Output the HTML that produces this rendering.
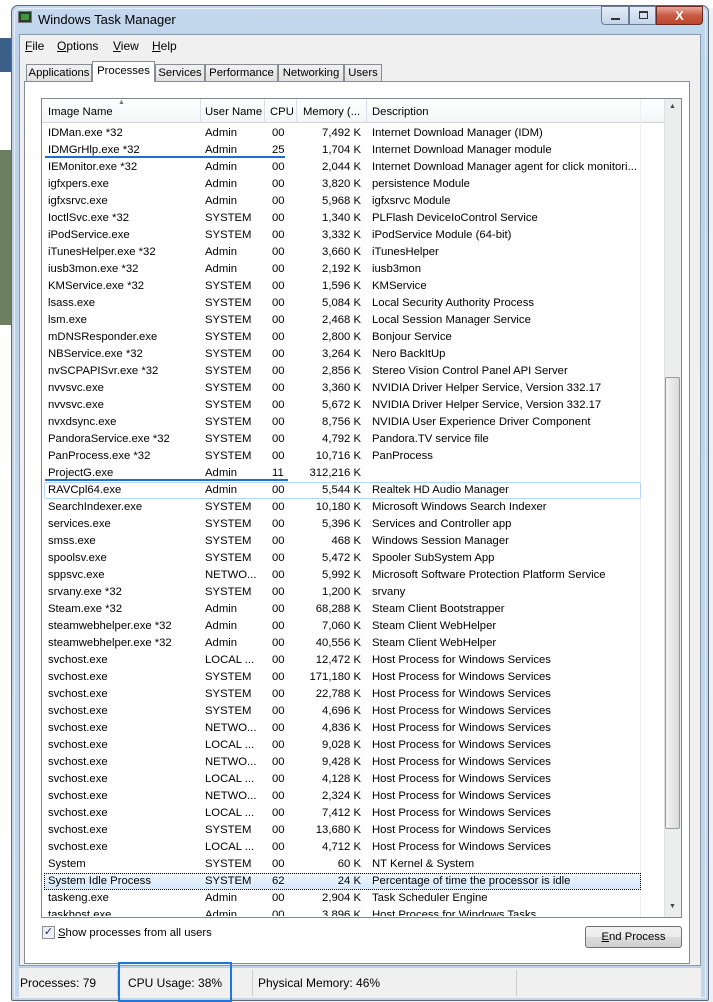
<!DOCTYPE html><html><head><meta charset="utf-8"><style>
*{margin:0;padding:0;box-sizing:border-box}
body{width:713px;height:1002px;overflow:hidden;background:#f0f0f0;font-family:"Liberation Sans",sans-serif;font-size:11.3px;color:#000;position:relative}
.a{position:absolute}
.row{position:absolute;left:42px;width:598px;height:17px;line-height:17px;white-space:nowrap}
.row span{position:absolute;top:0}
.c1{left:6px}.c2{left:163px}.c3{left:230px}.c4{right:279px;text-align:right}.c5{left:330px}
</style></head><body>
<div class="a" style="left:0;top:0;width:14px;height:1002px;background:#fff"></div>
<div class="a" style="left:0;top:38px;width:14px;height:34px;background:#3c5f8a"></div>
<div class="a" style="left:0;top:150px;width:14px;height:175px;background:#6e7e60"></div>
<div class="a" style="left:0;top:0;width:713px;height:8px;background:#fff"></div>
<div class="a" style="left:11px;top:5px;width:698px;height:996px;border:1px solid #5a6a80;border-radius:7px 7px 2px 2px;background:linear-gradient(#c5d8ee,#bcd2ea 60px,#c4d6ea);"></div>
<div class="a" style="left:14px;top:8px;width:692px;height:990px;border:1px solid #e6eef8;border-radius:6px 6px 0 0"></div>
<div class="a" style="left:18px;top:11px;width:14px;height:12px;background:#2a3a2a;border:1px solid #777"><div style="margin:2px;height:6px;background:#3c9a3c"></div></div>
<div class="a" style="left:38px;top:12px;font-size:13px;color:#000">Windows Task Manager</div>
<div class="a" style="left:601px;top:6px;width:28px;height:19px;border:1px solid #6b7c95;border-radius:0 0 0 4px;background:linear-gradient(#e4ecf6,#c4d4e8)"><div style="position:absolute;left:9px;top:11px;width:9px;height:2px;background:#333"></div></div>
<div class="a" style="left:629px;top:6px;width:27px;height:19px;border:1px solid #6b7c95;background:linear-gradient(#e4ecf6,#c4d4e8)"><div style="position:absolute;left:9px;top:4px;width:9px;height:8px;border:1px solid #333;border-top-width:2px"></div></div>
<div class="a" style="left:656px;top:6px;width:47px;height:19px;border:1px solid #6a2a20;border-radius:0 0 4px 0;background:linear-gradient(#e9a99a,#c75a44 50%,#c0452e);color:#fff;font-weight:bold;font-size:13px;text-align:center;line-height:17px">X</div>
<div class="a" style="left:19px;top:34px;width:682px;height:932px;background:#f0f0f0;border:1px solid #8899aa"></div>
<div class="a" style="left:25px;top:39px;font-size:12px"><u>F</u>ile</div>
<div class="a" style="left:57px;top:39px;font-size:12px"><u>O</u>ptions</div>
<div class="a" style="left:113px;top:39px;font-size:12px"><u>V</u>iew</div>
<div class="a" style="left:152px;top:39px;font-size:12px"><u>H</u>elp</div>
<div class="a" style="left:24px;top:81px;width:666px;height:883px;background:#fff;border:1px solid #898c95"></div>
<div class="a" style="left:26px;top:64px;width:66px;height:18px;border:1px solid #898c95;background:linear-gradient(#f2f2f2,#e0e0e0);text-align:center;line-height:16px">Applications</div>
<div class="a" style="left:92px;top:61px;width:63px;height:21px;border:1px solid #898c95;border-bottom:none;background:#fff;text-align:center;line-height:18px">Processes</div>
<div class="a" style="left:155px;top:64px;width:50px;height:18px;border:1px solid #898c95;background:linear-gradient(#f2f2f2,#e0e0e0);text-align:center;line-height:16px">Services</div>
<div class="a" style="left:205px;top:64px;width:73px;height:18px;border:1px solid #898c95;background:linear-gradient(#f2f2f2,#e0e0e0);text-align:center;line-height:16px">Performance</div>
<div class="a" style="left:278px;top:64px;width:66px;height:18px;border:1px solid #898c95;background:linear-gradient(#f2f2f2,#e0e0e0);text-align:center;line-height:16px">Networking</div>
<div class="a" style="left:344px;top:64px;width:38px;height:18px;border:1px solid #898c95;background:linear-gradient(#f2f2f2,#e0e0e0);text-align:center;line-height:16px">Users</div>
<div class="a" style="left:41px;top:98px;width:641px;height:820px;border:1px solid #828790;background:#fff;overflow:hidden">
 <div class="a" style="left:0;top:0;width:623px;height:24px;background:linear-gradient(#fff,#f3f5f8);border-bottom:1px solid #d5d5d5"></div>
 <div class="a" style="left:158px;top:0;width:1px;height:24px;background:#dde"></div>
 <div class="a" style="left:222px;top:0;width:1px;height:24px;background:#dde"></div>
 <div class="a" style="left:254px;top:0;width:1px;height:24px;background:#dde"></div>
 <div class="a" style="left:324px;top:0;width:1px;height:24px;background:#dde"></div>
 <div class="a" style="left:598px;top:0;width:1px;height:818px;background:#eee"></div>
 <div class="a" style="left:6px;top:7px">Image Name</div>
 <div class="a" style="left:76px;top:0;font-size:7px;color:#778">▲</div>
 <div class="a" style="left:163px;top:7px">User Name</div>
 <div class="a" style="left:228px;top:7px">CPU</div>
 <div class="a" style="left:261px;top:7px">Memory (...</div>
 <div class="a" style="left:330px;top:7px">Description</div>
 <div class="a" style="left:622px;top:0;width:17px;height:818px;background:#eceded;border-left:1px solid #e0e0e0"></div>
 <div class="a" style="left:627px;top:4px;font-size:7px;color:#444">▲</div>
 <div class="a" style="left:627px;top:804px;font-size:7px;color:#444">▼</div>
 <div class="a" style="left:623px;top:278px;width:15px;height:452px;border:1px solid #999;border-radius:2px;background:linear-gradient(90deg,#f4f4f4,#dadada)"></div>
</div>
<div id="rows"></div>
<div class="a" style="left:45px;top:156px;width:240px;height:2px;background:#1a6fd0"></div>
<div class="a" style="left:45px;top:479px;width:243px;height:2px;background:#1a6fd0"></div>
<div class="a" style="left:44px;top:482px;width:597px;height:17px;border:1px solid #b8d6fb;border-radius:2px"></div>
<div class="a" style="left:44px;top:873px;width:597px;height:17px;border:1px dotted #000;background:linear-gradient(#f1f7fe,#d5e6fb)"></div>
<div class="a" style="left:42px;top:926px;width:13px;height:13px;border:1px solid #8f8f8f;background:#eef;font-size:11px;line-height:11px;text-align:center;color:#234">✓</div>
<div class="a" style="left:58px;top:927px"><u>S</u>how processes from all users</div>
<div class="a" style="left:585px;top:926px;width:97px;height:22px;border:1px solid #707070;border-radius:3px;background:linear-gradient(#f2f2f2,#ebebeb 50%,#dddddd 51%,#cfcfcf);text-align:center;line-height:20px"><u>E</u>nd Process</div>
<div class="a" style="left:19px;top:967px;width:682px;height:31px;background:#f0f0f0;border-top:1px solid #ccc"></div>
<div class="a" style="left:117px;top:970px;width:1px;height:26px;background:#ccc"></div>
<div class="a" style="left:252px;top:970px;width:1px;height:26px;background:#ccc"></div>
<div class="a" style="left:516px;top:970px;width:1px;height:26px;background:#ccc"></div>
<div class="a" style="left:20px;top:976px;font-size:12px">Processes: 79</div>
<div class="a" style="left:128px;top:976px;font-size:12px">CPU Usage: 38%</div>
<div class="a" style="left:258px;top:976px;font-size:12px">Physical Memory: 46%</div>
<div class="a" style="left:118px;top:962px;width:114px;height:40px;border:2px solid #1e78d8"></div>
<script>
var d=`IDMan.exe *32|Admin|00|7,492 K|Internet Download Manager (IDM)
IDMGrHlp.exe *32|Admin|25|1,704 K|Internet Download Manager module
IEMonitor.exe *32|Admin|00|2,044 K|Internet Download Manager agent for click monitori...
igfxpers.exe|Admin|00|3,820 K|persistence Module
igfxsrvc.exe|Admin|00|5,968 K|igfxsrvc Module
IoctlSvc.exe *32|SYSTEM|00|1,340 K|PLFlash DeviceIoControl Service
iPodService.exe|SYSTEM|00|3,332 K|iPodService Module (64-bit)
iTunesHelper.exe *32|Admin|00|3,660 K|iTunesHelper
iusb3mon.exe *32|Admin|00|2,192 K|iusb3mon
KMService.exe *32|SYSTEM|00|1,596 K|KMService
lsass.exe|SYSTEM|00|5,084 K|Local Security Authority Process
lsm.exe|SYSTEM|00|2,468 K|Local Session Manager Service
mDNSResponder.exe|SYSTEM|00|2,800 K|Bonjour Service
NBService.exe *32|SYSTEM|00|3,264 K|Nero BackItUp
nvSCPAPISvr.exe *32|SYSTEM|00|2,856 K|Stereo Vision Control Panel API Server
nvvsvc.exe|SYSTEM|00|3,360 K|NVIDIA Driver Helper Service, Version 332.17
nvvsvc.exe|SYSTEM|00|5,672 K|NVIDIA Driver Helper Service, Version 332.17
nvxdsync.exe|SYSTEM|00|8,756 K|NVIDIA User Experience Driver Component
PandoraService.exe *32|SYSTEM|00|4,792 K|Pandora.TV service file
PanProcess.exe *32|SYSTEM|00|10,716 K|PanProcess
ProjectG.exe|Admin|11|312,216 K|
RAVCpl64.exe|Admin|00|5,544 K|Realtek HD Audio Manager
SearchIndexer.exe|SYSTEM|00|10,180 K|Microsoft Windows Search Indexer
services.exe|SYSTEM|00|5,396 K|Services and Controller app
smss.exe|SYSTEM|00|468 K|Windows Session Manager
spoolsv.exe|SYSTEM|00|5,472 K|Spooler SubSystem App
sppsvc.exe|NETWO...|00|5,992 K|Microsoft Software Protection Platform Service
srvany.exe *32|SYSTEM|00|1,200 K|srvany
Steam.exe *32|Admin|00|68,288 K|Steam Client Bootstrapper
steamwebhelper.exe *32|Admin|00|7,060 K|Steam Client WebHelper
steamwebhelper.exe *32|Admin|00|40,556 K|Steam Client WebHelper
svchost.exe|LOCAL ...|00|12,472 K|Host Process for Windows Services
svchost.exe|SYSTEM|00|171,180 K|Host Process for Windows Services
svchost.exe|SYSTEM|00|22,788 K|Host Process for Windows Services
svchost.exe|SYSTEM|00|4,696 K|Host Process for Windows Services
svchost.exe|NETWO...|00|4,836 K|Host Process for Windows Services
svchost.exe|LOCAL ...|00|9,028 K|Host Process for Windows Services
svchost.exe|NETWO...|00|9,428 K|Host Process for Windows Services
svchost.exe|LOCAL ...|00|4,128 K|Host Process for Windows Services
svchost.exe|NETWO...|00|2,324 K|Host Process for Windows Services
svchost.exe|LOCAL ...|00|7,412 K|Host Process for Windows Services
svchost.exe|SYSTEM|00|13,680 K|Host Process for Windows Services
svchost.exe|LOCAL ...|00|4,712 K|Host Process for Windows Services
System|SYSTEM|00|60 K|NT Kernel & System
System Idle Process|SYSTEM|62|24 K|Percentage of time the processor is idle
taskeng.exe|Admin|00|2,904 K|Task Scheduler Engine
taskhost.exe|Admin|00|3,896 K|Host Process for Windows Tasks`.split('\n');
var h='';d.forEach(function(l,i){var p=l.split('|');var t=125+17*i;var hh=t+17>916?916-t:17;
h+='<div class="row" style="top:'+t+'px;height:'+hh+'px;overflow:hidden;z-index:2"><span class="c1">'+p[0].replace('&','&amp;')+'</span><span class="c2">'+p[1]+'</span><span class="c3">'+p[2]+'</span><span class="c4" style="right:auto;left:250px;width:69px">'+p[3]+'</span><span class="c5">'+p[4].replace('&','&amp;')+'</span></div>';});
document.getElementById('rows').innerHTML=h;
</script>
</body></html>
